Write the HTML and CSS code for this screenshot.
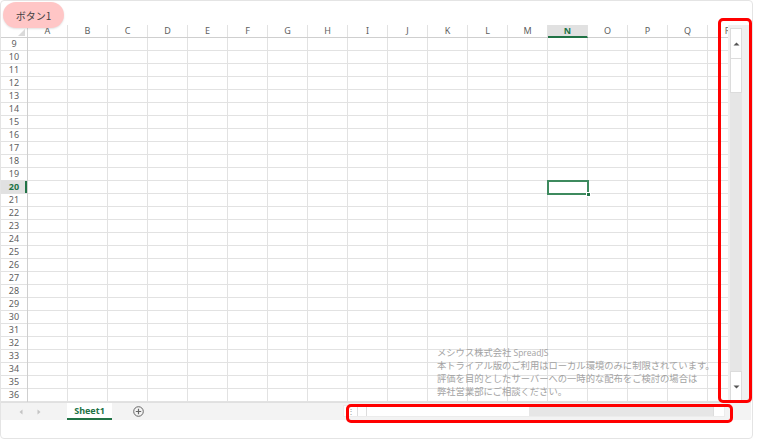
FILE: index.html
```html
<!DOCTYPE html>
<html lang="ja">
<head>
<meta charset="utf-8">
<link rel="stylesheet" href="styles.css">
</head>
<body>
<div class="host">
  <div class="sheet">
    <div class="main">
      <div class="grid">
        <div class="colhead">
          <div class="corner"><span class="tri"></span></div>
          <div class="ch">A</div><div class="ch">B</div><div class="ch">C</div><div class="ch">D</div><div class="ch">E</div><div class="ch">F</div><div class="ch">G</div><div class="ch">H</div><div class="ch">I</div><div class="ch">J</div><div class="ch">K</div><div class="ch">L</div><div class="ch">M</div><div class="ch sel">N</div><div class="ch">O</div><div class="ch">P</div><div class="ch">Q</div><div class="ch">R</div>
        </div>
        <div class="body">
          <div class="rowhead">
            <div class="rh">9</div><div class="rh">10</div><div class="rh">11</div><div class="rh">12</div><div class="rh">13</div><div class="rh">14</div><div class="rh">15</div><div class="rh">16</div><div class="rh">17</div><div class="rh">18</div><div class="rh">19</div><div class="rh sel">20</div><div class="rh">21</div><div class="rh">22</div><div class="rh">23</div><div class="rh">24</div><div class="rh">25</div><div class="rh">26</div><div class="rh">27</div><div class="rh">28</div><div class="rh">29</div><div class="rh">30</div><div class="rh">31</div><div class="rh">32</div><div class="rh">33</div><div class="rh">34</div><div class="rh">35</div><div class="rh">36</div>
          </div>
          <div class="cells">
            <div class="active"><span class="handle"></span></div>
            <div class="watermark">
              <div>メシウス株式会社 <span class="latin">SpreadJS</span></div>
              <div>本トライアル版のご利用はローカル環境のみに制限されています。</div>
              <div>評価を目的としたサーバーへの一時的な配布をご検討の場合は</div>
              <div>弊社営業部にご相談ください。</div>
            </div>
          </div>
        </div>
      </div>
      <div class="vscroll">
        <div class="vbtn"><svg width="7" height="4" viewBox="0 0 7 4"><path d="M0.5 3.5 L3.5 0.5 L6.5 3.5 Z" fill="#555"/></svg></div>
        <div class="vthumb"></div>
        <div class="vtrack"></div>
        <div class="vbtn"><svg width="7" height="4" viewBox="0 0 7 4"><path d="M0.5 0.5 L3.5 3.5 L6.5 0.5 Z" fill="#555"/></svg></div>
      </div>
    </div>
    <div class="tabbar">
      <div class="navs">
        <svg width="4" height="6" viewBox="0 0 4 6"><path d="M3.5 0.5 L0.5 3 L3.5 5.5 Z" fill="#c4c4c4"/></svg>
        <svg width="4" height="6" viewBox="0 0 4 6"><path d="M0.5 0.5 L3.5 3 L0.5 5.5 Z" fill="#c4c4c4"/></svg>
      </div>
      <div class="tab">Sheet1</div>
      <div class="add"><svg width="11" height="11" viewBox="0 0 11 11"><circle cx="5.5" cy="5.5" r="4.8" fill="none" stroke="#666" stroke-width="1"/><path d="M5.5 2.8 V8.2 M2.8 5.5 H8.2" stroke="#666" stroke-width="1.2"/></svg></div>
      <div class="hscroll">
        <div class="split">⋮</div>
        <div class="hbtn"></div>
        <div class="hthumb"></div>
        <div class="htrack"></div>
        <div class="hbtn"></div>
      </div>
    </div>
  </div>
  <button class="btn">ボタン1</button>
  <div class="mark mark-v"></div>
  <div class="mark mark-h"></div>
</div>
</body>
</html>
```

FILE: styles.css
```css
* { box-sizing: border-box; }
html, body { margin: 0; padding: 0; background: #fff; }
body { font-family: "Noto Sans", "Noto Sans CJK JP", sans-serif; }

.host {
  position: relative;
  width: 753px;
  height: 439px;
  border: 1px solid #e4e4e4;
  border-radius: 4px;
  background: #fff;
  padding-top: 24px;
  overflow: hidden;
}

.sheet { width: 750px; }
.main { display: flex; height: 377px; }

.grid { width: 727px; flex: none; overflow: hidden; display: flex; flex-direction: column; }

.colhead { display: flex; height: 13px; flex: none; border-bottom: 1px solid #cfcfcf; }
.corner { width: 27px; flex: none; position: relative; border-right: 1px solid #d6d6d6; }
.tri {
  position: absolute; right: 2px; bottom: 1px;
  width: 0; height: 0;
  border-left: 7px solid transparent;
  border-bottom: 7px solid #dadada;
}
.ch {
  width: 40px; flex: none;
  border-right: 1px solid #e2e2e2;
  font-size: 9px; line-height: 12px; color: #606060;
  text-align: center;
}
.ch.sel { background: #e1e1e1; color: #217346; font-weight: bold; border-bottom: 2px solid #217346; height: 13px; line-height: 12px; }

.body { display: flex; flex: 1; }
.rowhead { width: 27px; flex: none; border-right: 1px solid #cfcfcf; }
.rh {
  height: 13px;
  border-bottom: 1px solid #e2e2e2;
  font-size: 9px; line-height: 12px; color: #606060;
  text-align: center;
}
.rh.sel { background: #e1e1e1; color: #217346; font-weight: bold; box-shadow: inset -2px 0 0 #217346; }

.cells {
  position: relative;
  flex: 1;
  background-image:
    linear-gradient(to right, transparent 39px, #e2e2e2 39px),
    linear-gradient(to bottom, transparent 12px, #e2e2e2 12px);
  background-size: 40px 100%, 100% 13px;
}
.active {
  position: absolute;
  left: 519px; top: 142px;
  width: 42px; height: 15px;
  border: 2px solid #3d8a5e;
}
.handle {
  position: absolute; right: -4px; bottom: -4px;
  width: 5px; height: 5px; background: #217346; border: 1px solid #fff;
}

.watermark {
  position: absolute;
  left: 409px; top: 308px;
  font-family: "Noto Sans CJK JP", sans-serif;
  font-size: 9.3px; line-height: 13px;
  color: #a3a3a3;
  white-space: nowrap;
}
.watermark .latin { font-family: "Open Sans", sans-serif; font-size: 8.5px; }

.vscroll {
  width: 23px; flex: none;
  display: flex; flex-direction: column;
  background: #f0f0f0;
  padding: 3px 9px 0 2px;
}
.vbtn {
  height: 31px; flex: none;
  background: #fff; border: 1px solid #dcdcdc;
  display: flex; align-items: center; justify-content: center;
}
.vthumb { height: 34px; flex: none; background: #fff; border: 1px solid #dcdcdc; border-top: none; }
.vtrack { flex: 1; background: #e6e6e6; }

.tabbar {
  height: 18px;
  background: #f3f3f3;
  display: flex; align-items: stretch;
  border-top: 1px solid #e0e0e0;
}
.navs { width: 66px; display: flex; align-items: center; gap: 14px; padding-left: 18px; }
.tab {
  width: 45px;
  background: #fff;
  border-bottom: 2px solid #217346;
  color: #217346; font-weight: bold;
  font-size: 9px; line-height: 16px; text-align: center;
}
.add { width: 50px; display: flex; align-items: center; justify-content: center; padding-left: 2px; }
.hscroll {
  margin-left: 181px;
  width: 382px; height: 12px; margin-top: 2px;
  display: flex; align-items: stretch;
  background: #fff;
  border: 1px solid #ececec;
}
.split { width: 14px; font-size: 8px; line-height: 10px; color: #999; text-align: center; border-right: 1px solid #ddd; }
.hbtn { width: 9px; border-right: 1px solid #ddd; }
.hthumb { width: 162px; background: #fff; }
.htrack { flex: 1; background: #e6e6e6; border-right: 1px solid #ddd; }
.hscroll .hbtn:last-child { border-right: none; width: 10px; }

.btn {
  position: absolute; left: 2px; top: 1px;
  width: 61px; height: 26px;
  border: none; border-radius: 13px;
  background: #ffc6c6;
  color: #404040;
  font-family: "Noto Sans CJK JP", sans-serif;
  font-size: 10px;
  box-shadow: 0 1px 2px rgba(0,0,0,0.12);
  padding: 0;
}

.mark { position: absolute; border: 3px solid #ff0000; border-radius: 5px; }
.mark-v { left: 717px; top: 17px; width: 34px; height: 385px; }
.mark-h { left: 345px; top: 403px; width: 387px; height: 19px; }
```
